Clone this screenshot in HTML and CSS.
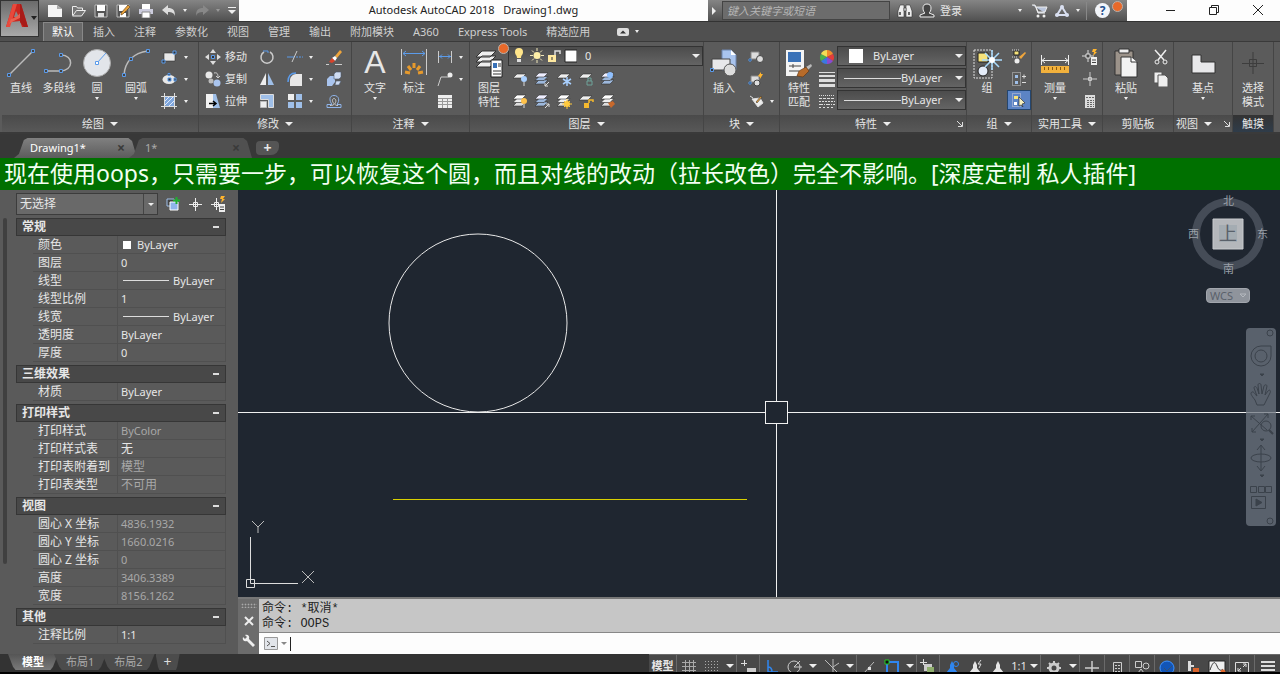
FILE: index.html
```html
<!DOCTYPE html>
<html lang="zh-CN">
<head>
    <meta charset="UTF-8">
    <meta name="viewport" content="width=device-width, initial-scale=1.0">
    <title>Autodesk AutoCAD 2018 - Drawing1.dwg</title>
    <link rel="stylesheet" href="styles.css">
</head>
<body>
    <!-- shared icons -->
    <svg class="sprite" aria-hidden="true">
        <symbol id="sheets" viewBox="0 0 16 16">
            <path d="M5 9h9l-4 4H1z" fill="#ddd" stroke="#333" stroke-width=".6"/>
            <path d="M5 5.500h9l-4 4H1z" fill="#eee" stroke="#333" stroke-width=".6"/>
            <path d="M5 2h9l-4 4H1z" fill="#fff" stroke="#333" stroke-width=".6"/>
        </symbol>
        <symbol id="bluesheets" viewBox="0 0 16 16">
            <path d="M5 9h9l-4 4H1z" fill="#9db8dc" stroke="#333" stroke-width=".6"/>
            <path d="M5 5.500h9l-4 4H1z" fill="#9db8dc" stroke="#333" stroke-width=".6"/>
            <path d="M5 2h9l-4 4H1z" fill="#eef" stroke="#333" stroke-width=".6"/>
        </symbol>
        <symbol id="sheet" viewBox="0 0 16 16">
            <path d="M5 3h9l-4 4H1z" fill="#eee" stroke="#333" stroke-width=".6"/>
        </symbol>
        <symbol id="person" viewBox="0 0 16 16">
            <path d="M8 2l2 4v3l4 5-4-1v3H6v-3l-4 1 4-5V6z" fill="currentColor"/>
        </symbol>
    </svg>

    <header class="header">
        <button class="app-button" aria-label="应用程序菜单">
            <svg width="24" height="26" viewBox="0 0 24 26">
                <path d="M8 1h8l7 23h-6l-2-6-9 1-2 5H1z" fill="#c9261f"/>
                <path d="M8 1h4L5 24H1z" fill="#e8493c"/>
                <path d="M11 8l3 6H9z" fill="#888"/>
                <path d="M6 16c4-1 8-4 11-8l2 5c-4 2-9 4-15 8z" fill="#e8604f"/>
                <path d="M15 19l4 5h4L16 1h-1z" fill="#a81b18"/>
            </svg>
            <i class="caret dark"></i>
        </button>

        <div class="title-row">
            <div class="quick">
                <button aria-label="新建"><svg width="16" height="14" viewBox="0 0 16 14"><path d="M1 1h9l5 4v8H1z" fill="#f4f4f4"/><path d="M10 1v4h5z" fill="#aaa"/></svg></button>
                <button aria-label="打开"><svg width="16" height="14" viewBox="0 0 16 14" fill="none" stroke="#eee"><path d="M1.500 11V2.500h4l1 1.500h5v3M1.500 12l4-5.500h9l-4 5.500z" fill="#777"/></svg></button>
                <button aria-label="保存"><svg width="14" height="14" viewBox="0 0 14 14"><path d="M1 1h12v12H1z" fill="#555" stroke="#bbb"/><path d="M3 1h8v6H3z" fill="#fff"/><path d="M4 9h6v4H4z" fill="#ddd"/></svg></button>
                <button aria-label="另存为"><svg width="15" height="14" viewBox="0 0 15 14"><path d="M1 1h12v12H1z" fill="#555" stroke="#bbb"/><path d="M3 1h8v6H3zM4 9h6v4H4z" fill="#fff"/><path d="M5 9l7-8 2 2-7 7-2 1z" fill="#e9a23b" stroke="#5b3a10" stroke-width=".6"/></svg></button>
                <button aria-label="打印"><svg width="16" height="14" viewBox="0 0 16 14"><path d="M4 0h8v5H4z" fill="#fff"/><path d="M1 5h14v5H1z" fill="#ccd"/><path d="M4 8h8v6H4z" fill="#fff" stroke="#888"/></svg></button>
                <button aria-label="放弃"><svg width="14" height="14" viewBox="0 0 14 14"><path d="M0 6l6-5v3c5 0 7 2 7 8-1-3-3-4-7-4v3z" fill="#ddd"/></svg></button>
                <i class="caret"></i>
                <button aria-label="重做"><svg width="14" height="14" viewBox="0 0 14 14"><path d="M14 6L8 1v3C3 4 1 6 1 12c1-3 3-4 7-4v3z" fill="#888"/></svg></button>
                <i class="caret faint"></i>
                <button aria-label="自定义快速访问工具栏"><svg width="8" height="8" viewBox="0 0 8 8" fill="#eee"><path d="M0 0h8v1H0zM0 3h8L4 7z"/></svg></button>
            </div>
            <div class="title">Autodesk AutoCAD 2018 &nbsp;&nbsp;Drawing1.dwg</div>
            <div class="info">
                <svg class="play" width="4" height="8" viewBox="0 0 4 8"><path d="M0 0l4 4-4 4z" fill="#eee"/></svg>
                <input class="search" type="text" placeholder="键入关键字或短语" aria-label="搜索">
                <button aria-label="查找"><svg width="16" height="16" viewBox="0 0 16 16" fill="#eee" stroke="#333" stroke-width=".6"><path d="M3 2h4v5l0 7H1V8zM9 2h4l2 6v6H9z"/><path d="M7 5h2v3H7z"/><path d="M3 9v3M12 9v3" stroke="#666" stroke-width="2"/></svg></button>
                <button class="login"><svg width="16" height="16" viewBox="0 0 16 16"><path d="M8 1c3 0 4 2 4 4 0 3-1 4-2 5l5 2v2H1v-2l5-2C5 9 4 8 4 5c0-2 1-4 4-4z" fill="#444" stroke="#eee"/></svg>登录</button>
                <i class="caret push"></i>
                <button aria-label="应用商店"><svg width="16" height="14" viewBox="0 0 16 14"><path d="M0 1h3l3 8h7M4 3h11l-2 5H6z" fill="#bbc6dd" stroke="#eee"/><circle cx="6" cy="12" r="1.500" fill="#eee"/><circle cx="12" cy="12" r="1.500" fill="#eee"/></svg></button>
                <button aria-label="A360"><svg width="16" height="14" viewBox="0 0 16 14"><path d="M8 3l5 8H3z" fill="none" stroke="#d9dff0" stroke-width="2"/><circle cx="8" cy="3" r="2" fill="#d9dff0"/><circle cx="3" cy="11" r="2" fill="#d9dff0"/><circle cx="13" cy="11" r="2" fill="#d9dff0"/></svg></button>
                <i class="caret"></i>
                <span class="info-line"></span>
                <button class="help" aria-label="帮助">?<span class="dot"></span></button>
            </div>
            <div class="window-buttons">
                <button aria-label="最小化"><svg width="12" height="12" viewBox="0 0 12 12" stroke="#222"><path d="M1 6.500h9"/></svg></button>
                <button aria-label="还原"><svg width="12" height="12" viewBox="0 0 12 12" fill="none" stroke="#222"><path d="M1.500 3.500h7v7h-7zM3.500 3V1.500h7v7H9"/></svg></button>
                <button aria-label="关闭"><svg width="12" height="12" viewBox="0 0 12 12" stroke="#222"><path d="M1 1l10 10M11 1L1 11"/></svg></button>
            </div>
        </div>

        <nav class="menu">
            <a class="active" href="#">默认</a>
            <a href="#">插入</a>
            <a href="#">注释</a>
            <a href="#">参数化</a>
            <a href="#">视图</a>
            <a href="#">管理</a>
            <a href="#">输出</a>
            <a href="#">附加模块</a>
            <a href="#">A360</a>
            <a href="#">Express Tools</a>
            <a href="#">精选应用</a>
            <button class="menu-toggle" aria-label="最小化功能区"><svg width="12" height="8" viewBox="0 0 12 8"><rect width="12" height="8" rx="2" fill="#ddd"/><path d="M3 5.500l3-3 3 3z" fill="#333"/></svg><i class="caret"></i></button>
        </nav>
    </header>

    <section class="ribbon">
        <div class="panel draw">
            <div class="tools">
                <button class="big">
                    <svg width="30" height="34" viewBox="0 0 30 34" fill="none"><path d="M3 29L27 5" stroke="#bbb" stroke-width="1.500"/><path d="M1.500 27.500h3v3h-3zM25.500 3.500h3v3h-3z" fill="#444" stroke="#5b9bea"/></svg>
                    <span>直线</span>
                </button>
                <button class="big">
                    <svg width="30" height="34" viewBox="0 0 30 34" fill="none"><path d="M2 25h14c14 0 14-16 1-16" stroke="#bbb" stroke-width="1.500"/><path d="M.5 23.500h3v3h-3zM15.500 23.500h3v3h-3zM15.500 7.500h3v3h-3z" fill="#444" stroke="#5b9bea"/></svg>
                    <span>多段线</span>
                </button>
                <button class="big">
                    <svg width="30" height="34" viewBox="0 0 30 34" fill="none"><circle cx="15" cy="17" r="13.500" fill="#e2e5ea" stroke="#aaa"/><path d="M15 17l9-10" stroke="#5b9bea"/><path d="M13.500 15.500h3v3h-3z" fill="#fff" stroke="#5b9bea"/></svg>
                    <span>圆</span><i class="caret"></i>
                </button>
                <button class="big">
                    <svg width="30" height="34" viewBox="0 0 30 34" fill="none"><path d="M3 29C4 16 12 7 27 5" stroke="#bbb" stroke-width="1.500"/><path d="M1.500 27.500h3v3h-3zM8.500 11.500h3v3h-3zM25.500 3.500h3v3h-3z" fill="#444" stroke="#5b9bea"/></svg>
                    <span>圆弧</span><i class="caret"></i>
                </button>
                <div class="smalls">
                    <button class="small" aria-label="矩形"><svg width="16" height="16" viewBox="0 0 16 16"><path d="M3 4h11v8H3z" fill="#e8e8e8" stroke="#333" stroke-width=".6"/><path d="M1 11h3v3H1zM12 2h3v3h-3z" fill="#333" stroke="#5b9bea"/></svg><i class="caret"></i></button>
                    <button class="small" aria-label="椭圆"><svg width="16" height="16" viewBox="0 0 16 16"><ellipse cx="8" cy="8.500" rx="6.500" ry="4.500" fill="#e8e8e8"/><path d="M7 7h3v3H7z" fill="#333" stroke="#5b9bea"/><path d="M13 7h2v3h-2zM7 2.500h2v2H7z" fill="#333" stroke="#5b9bea"/></svg><i class="caret"></i></button>
                    <button class="small" aria-label="图案填充"><svg width="16" height="16" viewBox="0 0 16 16"><path d="M4 4h9v9H4z" fill="#7fa6dc"/><path d="M4 8l4-4M4 12l8-8M8 13l5-5" stroke="#dfeafc"/><path d="M0 3.500h16M0 13.500h16M3.500 0v16M13.500 0v16" stroke="#ddd"/></svg><i class="caret"></i></button>
                </div>
            </div>
            <button class="panel-title">绘图<i class="caret wide"></i></button>
        </div>

        <div class="panel modify">
            <div class="tools modify-grid">
                <button class="small text"><svg width="16" height="16" viewBox="0 0 16 16"><path d="M8 0l3 4H5zM8 16l3-4H5zM0 8l4-3v6zM16 8l-4-3v6z" fill="#ddd"/><path d="M6.500 6.500h3v3h-3z" fill="#333" stroke="#5b9bea"/></svg>移动</button>
                <button class="small" aria-label="旋转"><svg width="16" height="16" viewBox="0 0 16 16" fill="none"><path d="M5 3a6 6 0 1 0 6 0" stroke="#ccc" stroke-width="1.500"/><path d="M4 2h5v2" stroke="#5b9bea"/></svg></button>
                <button class="small" aria-label="修剪"><svg width="16" height="16" viewBox="0 0 16 16"><path d="M0 8h7" stroke="#5b9bea"/><path d="M9 8h7" stroke="#5b9bea" stroke-dasharray="2 1"/><path d="M5 13L10 2" stroke="#ccc"/></svg><i class="caret"></i></button>
                <button class="small" aria-label="删除"><svg width="16" height="16" viewBox="0 0 16 16"><path d="M0 15.500h3M9 15.500h7" stroke="#ccc"/><path d="M9 7l5-6 2 2-5 6z" fill="#f0a63c"/><path d="M6 9l3-2 2 2-2 3z" fill="#fff"/><path d="M3 13l3-4 3 3-3 2z" fill="#d8432b"/></svg></button>

                <button class="small text"><svg width="16" height="16" viewBox="0 0 16 16"><circle cx="4" cy="4" r="3.500" fill="#e8e8e8"/><circle cx="6" cy="10" r="2.500" fill="#bbb"/><circle cx="12" cy="12" r="3.500" fill="#a9c4ee"/><path d="M9 2c4-1 4 2 4 5M11 5l2 2 2-2" stroke="#ccc" fill="none"/></svg>复制</button>
                <button class="small" aria-label="镜像"><svg width="16" height="16" viewBox="0 0 16 16"><path d="M7 2v12H1z" fill="#eee"/><path d="M9 2v12h6z" fill="#9fbfe8"/></svg></button>
                <button class="small" aria-label="圆角"><svg width="16" height="16" viewBox="0 0 16 16"><path d="M3 15V9c0-3 3-6 6-6h6v12z" fill="#e8e8e8"/><path d="M1 11c0-6 3-9 8-9" stroke="#5b9bea" stroke-width="1.500" fill="none"/></svg><i class="caret"></i></button>
                <button class="small" aria-label="分解"><svg width="16" height="16" viewBox="0 0 16 16"><path d="M1 8l3-3h5v6l-3 4H1z" fill="#a9c4ee"/><path d="M8 3l2-2h5v5l-2 2H8zM10 10h5l-2 4h-4z" fill="#cfdcf2" stroke="#4d5a70" stroke-width=".6"/></svg></button>

                <button class="small text"><svg width="16" height="16" viewBox="0 0 16 16"><path d="M1 1h7v14H1z" fill="#f2f2f2"/><path d="M8 1h3l4 14H8z" fill="#9fbfe8"/><path d="M4 10.500h6M8 8l3 2.500L8 13" stroke="#000" fill="none" stroke-width="1.500"/></svg>拉伸</button>
                <button class="small" aria-label="缩放"><svg width="16" height="16" viewBox="0 0 16 16"><path d="M1.500 1.500h13v13h-5v-8h-8z" fill="#9fbfe8" stroke="#ddd"/><path d="M1.500 8.500h6v6h-6z" fill="#eee" stroke="#bbb"/></svg></button>
                <button class="small" aria-label="阵列"><svg width="16" height="16" viewBox="0 0 16 16"><path d="M1 1h6v6H1z" fill="#eee"/><path d="M9 1h6v6H9zM1 9h6v6H1zM9 9h6v6H9z" fill="#9fbfe8"/></svg><i class="caret"></i></button>
                <button class="small" aria-label="偏移"><svg width="16" height="16" viewBox="0 0 16 16" fill="none"><path d="M1 14.500h14v-3h-4c3-4 2-9-3-9s-5 5-2 9H1z" stroke="#8fb4ea"/><path d="M4 12.500c2 0 4 0 4-2-3-3-1-5 0-5s3 2 1 5c0 2 1 2 3 2" stroke="#ccc"/></svg></button>
            </div>
            <button class="panel-title">修改<i class="caret wide"></i></button>
        </div>

        <div class="panel annotate">
            <div class="tools">
                <button class="big">
                    <b class="letter">A</b>
                    <span>文字</span><i class="caret"></i>
                </button>
                <button class="big">
                    <svg width="30" height="34" viewBox="0 0 30 34" fill="none"><path d="M2.500 3v26M27.500 3v26" stroke="#ccc"/><path d="M4 7.500h22M7 5L4 7.500 7 10M23 5l3 2.500-3 2.500" stroke="#5b9bea"/><path d="M15 17v5M9 20l3 4M21 20l-3 4M6 26l5 1M24 26l-5 1" stroke="#e79a2c" stroke-width="3"/></svg>
                    <span>标注</span>
                </button>
                <div class="smalls">
                    <button class="small" aria-label="线性"><svg width="16" height="16" viewBox="0 0 16 16" fill="none"><path d="M1.500 2v12M14.500 2v12" stroke="#ccc"/><path d="M2 7.500h12M5 5.500L3 7.500l2 2M11 5.500l2 2-2 2" stroke="#5b9bea"/></svg><i class="caret"></i></button>
                    <button class="small" aria-label="引线"><svg width="16" height="16" viewBox="0 0 16 16" fill="none"><path d="M1 15l3-9h8" stroke="#ccc"/><circle cx="13" cy="4" r="2.500" fill="#eee"/></svg><i class="caret"></i></button>
                    <button class="small" aria-label="表格"><svg width="16" height="16" viewBox="0 0 16 16"><path d="M1 2h14v13H1z" fill="#eee"/><path d="M1 5.500h14M1 8.500h14M1 11.500h14M5.500 5v10M10.500 5v10" stroke="#999"/></svg></button>
                </div>
            </div>
            <button class="panel-title">注释<i class="caret wide"></i></button>
        </div>

        <div class="panel layers">
            <div class="tools">
                <button class="big">
                    <svg width="30" height="34" viewBox="0 0 30 34"><path d="M8 15h14l-6 6H2z M8 10h14l-6 6H2z M8 5h14l-6 6H2z" fill="#eee" stroke="#333"/><path d="M17 14h11v17H17z" fill="#fff" stroke="#222"/><path d="M19 17h4v5h-4z" fill="#3a72b8"/><path d="M24 18h3M24 20h3M19 25h8M19 28h8" stroke="#333"/></svg>
                    <span>图层<br>特性</span>
                    <span class="dot"></span>
                </button>
                <div class="layer-tools">
                    <div class="combo">
                        <svg width="66" height="18" viewBox="0 0 66 18">
                            <path d="M8 1a4 4 0 0 1 4 4c0 3-2 3-2 6H6c0-3-2-3-2-6a4 4 0 0 1 4-4z" fill="#ffe58a"/><path d="M6 12h4v3H6z" fill="#ddd"/>
                            <circle cx="26" cy="8.500" r="3.500" fill="#fff0a8"/><path d="M26 1v3M26 13v3M19 8.500h3M30 8.500h3M21 3.500l2 2M31 3.500l-2 2M21 13.500l2-2M31 13.500l-2-2" stroke="#f0e6b8"/>
                            <path d="M37 8h8v7h-8z" fill="#ffe9a0"/><path d="M44 8V4h5v3" stroke="#ddd" fill="none" stroke-width="1.500"/><path d="M41 10v3" stroke="#333"/>
                            <path d="M54 3h12v12H54z" fill="#fff" stroke="#222"/>
                        </svg>
                        <select aria-label="图层"><option>0</option></select>
                    </div>
                    <div class="layer-icons">
                        <button class="small" aria-label="关闭图层"><svg width="16" height="16"><use href="#sheet"/><circle cx="12" cy="8" r="3" fill="#a9d0ff"/><path d="M12 11v4" stroke="#ddd"/></svg></button>
                        <button class="small" aria-label="隔离"><svg width="16" height="16"><use href="#bluesheets"/><path d="M15 11l-4 4m0-3v3h3" stroke="#ddd" fill="none"/></svg></button>
                        <button class="small" aria-label="冻结"><svg width="16" height="16"><use href="#sheet"/><path d="M11 6v9M7 8l8 5M15 8l-8 5" stroke="#a9d0ff" stroke-width="1.500"/></svg></button>
                        <button class="small" aria-label="锁定"><svg width="16" height="16"><use href="#sheet"/><path d="M9 10h5v4H9zM10 10V7h3v3" fill="none" stroke="#6fa39a"/></svg></button>
                        <button class="small" aria-label="置为当前"><svg width="16" height="16"><use href="#bluesheets"/><circle cx="10" cy="4" r="3" fill="#8fc0ff"/></svg></button>
                        <button class="small" aria-label="打开所有图层"><svg width="16" height="16"><use href="#sheets"/><circle cx="12" cy="8" r="3" fill="#ffc24a"/><path d="M12 11v4" stroke="#ddd"/></svg></button>
                        <button class="small" aria-label="取消隔离"><svg width="16" height="16"><use href="#bluesheets"/><path d="M11 15l4-4m-3 0h3v3" stroke="#ddd" fill="none"/></svg></button>
                        <button class="small" aria-label="解冻"><svg width="16" height="16"><use href="#sheets"/><circle cx="11" cy="11" r="3" fill="#ffc93c"/><path d="M11 6v10M6 11h10M8 8l6 6M14 8l-6 6" stroke="#ffc93c"/></svg></button>
                        <button class="small" aria-label="解锁"><svg width="16" height="16"><use href="#sheet"/><path d="M6 10h5v5H6z" fill="#f5b92e"/><path d="M11 10V7h4v2" fill="none" stroke="#f5b92e" stroke-width="1.500"/></svg></button>
                        <button class="small" aria-label="匹配图层"><svg width="16" height="16"><use href="#sheets"/><path d="M8 10l5-2 2 3-4 4z" fill="#c8692c"/></svg></button>
                    </div>
                </div>
            </div>
            <button class="panel-title">图层<i class="caret wide"></i></button>
        </div>

        <div class="panel block">
            <div class="tools">
                <button class="big">
                    <svg width="30" height="34" viewBox="0 0 30 34"><path d="M13 4h9l5 5v15H13z" fill="#a9c4ee" stroke="#6e87b0"/><path d="M22 4v5h5z" fill="#fff"/><path d="M3 13h18v11H3z" fill="#e8e8ea" stroke="#444"/><circle cx="21" cy="24" r="6" fill="#ddd" stroke="#555"/><path d="M1.500 22.500h3v3h-3z" fill="#333" stroke="#5b9bea"/></svg>
                    <span>插入</span>
                </button>
                <div class="smalls">
                    <button class="small" aria-label="创建块"><svg width="16" height="16" viewBox="0 0 16 16"><path d="M3 3h8v7H3z" fill="#ddd" stroke="#888"/><circle cx="12" cy="10" r="3.500" fill="#ddd" stroke="#444"/><path d="M1 10h2v2H1z" stroke="#5b9bea"/></svg></button>
                    <button class="small" aria-label="编辑块"><svg width="16" height="16" viewBox="0 0 16 16"><path d="M3 5h8v6H3z" fill="#ddd" stroke="#888"/><circle cx="9" cy="12" r="3" fill="#ddd" stroke="#444"/><path d="M1 11h2v2H1z" stroke="#5b9bea"/><path d="M10 5l3-4v2h2l-3 5V6z" fill="#ffb52e"/></svg></button>
                    <button class="small" aria-label="编辑属性"><svg width="16" height="16" viewBox="0 0 16 16"><path d="M2 3l3 2M4 6l6 8 5-4-3-5z" stroke="#ddd" fill="#eee"/><path d="M8 9l5-6 1 1-5 6z" fill="#f0a63c" stroke="#333" stroke-width=".6"/></svg><i class="caret"></i></button>
                </div>
            </div>
            <button class="panel-title">块<i class="caret wide"></i></button>
        </div>

        <div class="panel props">
            <div class="tools">
                <button class="big">
                    <svg width="30" height="34" viewBox="0 0 30 34"><path d="M2 4h18v26H2z" fill="#f4f4f4"/><path d="M4 6h13v10H4z" fill="#3a72b8"/><path d="M5 20h12M9 18v4M5 25h10" stroke="#444"/><path d="M22 21l5-3 1 2-4 4z" fill="#bbb"/><path d="M15 25l7-4 3 4-6 6-6-1z" fill="#b76b2a" stroke="#5b3210" stroke-width=".6"/></svg>
                    <span>特性<br>匹配</span>
                </button>
                <div class="smalls">
                    <button class="small" aria-label="对象颜色"><svg width="16" height="16" viewBox="0 0 16 16"><path d="M8 8V1a7 7 0 0 1 6 4z" fill="#f08a2c"/><path d="M8 8l6-3a7 7 0 0 1 0 7z" fill="#e23c3c"/><path d="M8 8l6 4a7 7 0 0 1-6 3z" fill="#8a4bd0"/><path d="M8 8v7a7 7 0 0 1-6-3z" fill="#3b78e0"/><path d="M8 8l-6 4a7 7 0 0 1 0-7z" fill="#4cb04c"/><path d="M8 8L2 5a7 7 0 0 1 6-4z" fill="#f3dc55"/></svg></button>
                    <button class="small" aria-label="线宽"><svg width="16" height="16" viewBox="0 0 16 16" fill="#ddd"><path d="M0 1h16v1H0zM0 4h16v2H0zM0 8h16v3H0zM0 13h16v3H0z"/></svg></button>
                    <button class="small" aria-label="线型"><svg width="16" height="16" viewBox="0 0 16 16" stroke="#ddd"><path d="M0 2.500h16" stroke-dasharray="1 1"/><path d="M0 5.500h16" stroke-dasharray="3 1"/><path d="M0 8.500h16" stroke-dasharray="2 1"/><path d="M0 11.500h16" stroke-dasharray="4 1 1 1"/><path d="M0 14.500h16" stroke-dasharray="2 2"/></svg></button>
                </div>
                <div class="prop-combos">
                    <div class="combo color"><span class="swatch"></span><select aria-label="对象颜色"><option>ByLayer</option></select></div>
                    <div class="combo"><span class="line"></span><select aria-label="线宽"><option>ByLayer</option></select></div>
                    <div class="combo"><span class="line"></span><select aria-label="线型"><option>ByLayer</option></select></div>
                </div>
            </div>
            <div class="panel-title"><button>特性<i class="caret wide"></i></button><svg class="launcher" width="6" height="6" viewBox="0 0 6 6" stroke="#ddd" fill="none"><path d="M0 0l5 5M5.500 1v4.500H1"/></svg></div>
        </div>

        <div class="panel group">
            <div class="tools">
                <button class="big">
                    <svg width="34" height="34" viewBox="0 0 34 34"><path d="M4 4h18v28H4z" fill="none" stroke="#ddd" stroke-dasharray="2 1"/><path d="M8 7h10v9H8z" fill="#f6e27a" stroke="#222"/><circle cx="13" cy="25" r="5" fill="#e4ecf8" stroke="#222"/><path d="M22 4v20M12 14h20M15 7l14 14M29 7L15 21" stroke="#a9dcff" stroke-width="1.500"/><circle cx="22" cy="14" r="3" fill="#fff"/></svg>
                    <span>组</span>
                </button>
                <div class="smalls">
                    <button class="small" aria-label="解除编组"><svg width="16" height="16" viewBox="0 0 16 16"><path d="M3 2h5v4H3z" fill="#f6e27a" stroke="#222"/><circle cx="6" cy="12" r="2.500" fill="#eee"/><path d="M1 1h8M1 8h6" stroke="#ddd" stroke-dasharray="1 1"/><path d="M8 8l6-5 1 1-5 6z" fill="#f0a63c"/></svg></button>
                    <button class="small" aria-label="组编辑"><svg width="16" height="16" viewBox="0 0 16 16" fill="none"><path d="M1.500 1.500h8v13h-8z" stroke="#ccc" stroke-dasharray="1 1"/><path d="M4 4h3v3H4zM4 10h3v3H4z" fill="#9fbfe8"/><path d="M11 5.500h4M13 3.500v4M11 11.500h4" stroke="#ddd"/></svg></button>
                    <button class="small pressed" aria-label="启用组选择"><svg width="16" height="16" viewBox="0 0 16 16" fill="none"><path d="M1.500 1.500h8v13h-8z" stroke="#ccd" stroke-dasharray="1 1"/><path d="M3 4h4v3H3z" fill="#f6e27a"/><path d="M3 10h3v3H3z" fill="#fff"/><path d="M8 5l6 6-3 1 1 3-2-2-2 1z" fill="#f6f0c0" stroke="#222" stroke-width=".6"/></svg></button>
                </div>
            </div>
            <button class="panel-title">组<i class="caret wide"></i></button>
        </div>

        <div class="panel utils">
            <div class="tools">
                <button class="big">
                    <svg width="30" height="34" viewBox="0 0 30 34" fill="none"><path d="M1.500 9v10M28.500 9v10M2 14.500h26M5 12l-3 2.500L5 17M25 12l3 2.500-3 2.500" stroke="#eee"/><path d="M1 20h28v7H1z" fill="#f2b13c"/><path d="M4.500 21v3M8.500 21v3M12.500 21v3M16.500 21v3M20.500 21v3M24.500 21v3" stroke="#8a5a10"/></svg>
                    <span>测量</span><i class="caret"></i>
                </button>
                <div class="smalls">
                    <button class="small" aria-label="快速选择"><svg width="16" height="16" viewBox="0 0 16 16"><path d="M6 1v12M0 7h12" stroke="#ddd"/><path d="M4 5h4v4H4z" fill="#444" stroke="#ddd"/><path d="M11 0h4l-2 3h2l-4 4 1-4h-2z" fill="#ffb52e"/><path d="M9 8h6v8H9z" fill="#eee"/><path d="M10 11h4M10 13.500h4" stroke="#444"/></svg></button>
                    <button class="small" aria-label="点坐标"><svg width="16" height="16" viewBox="0 0 16 16" stroke="#ccc" fill="none"><path d="M8 1v14M1 8h14M6.500 6.500h3v3h-3z"/></svg></button>
                    <button class="small" aria-label="快速计算器"><svg width="16" height="16" viewBox="0 0 16 16"><path d="M3 2h10v13H3z" fill="#ddd"/><path d="M4 4.500h8M5 7.500h7M5 9.500h7M5 11.500h7M5 13.500h7" stroke="#666" stroke-dasharray="2 1"/></svg></button>
                </div>
            </div>
            <button class="panel-title">实用工具<i class="caret wide"></i></button>
        </div>

        <div class="panel clip">
            <div class="tools">
                <button class="big">
                    <svg width="30" height="34" viewBox="0 0 30 34"><path d="M4 5h18v24H4z" fill="#9c938a" stroke="#333"/><path d="M8 3h10v4H8z" fill="#eee" stroke="#333"/><path d="M10 11h10l6 5v15H10z" fill="#f2f2f2" stroke="#333"/><path d="M20 11v5h6" fill="#fff" stroke="#333"/></svg>
                    <span>粘贴</span><i class="caret"></i>
                </button>
                <div class="smalls">
                    <button class="small" aria-label="剪切"><svg width="16" height="16" viewBox="0 0 16 16" fill="none" stroke="#eee"><path d="M2 1l9 10M13 1L5 11" stroke-width="1.500"/><circle cx="4" cy="13" r="2"/><circle cx="12" cy="13" r="2"/></svg></button>
                    <button class="small" aria-label="复制剪裁"><svg width="16" height="16" viewBox="0 0 16 16" fill="#eee" stroke="#555"><path d="M1 1h8v11H1z"/><path d="M5 4h7l3 3v9H5z"/></svg></button>
                </div>
            </div>
            <div class="panel-title">剪贴板</div>
        </div>

        <div class="panel view">
            <div class="tools">
                <button class="big">
                    <svg width="30" height="34" viewBox="0 0 30 34"><path d="M4 9h9v7h14v11H4z" fill="#e8e8ea" stroke="#333"/></svg>
                    <span>基点</span><i class="caret"></i>
                </button>
            </div>
            <div class="panel-title"><button>视图<i class="caret wide"></i></button><svg class="launcher" width="6" height="6" viewBox="0 0 6 6" stroke="#ddd" fill="none"><path d="M0 0l5 5M5.500 1v4.500H1"/></svg></div>
        </div>

        <div class="panel touch">
            <div class="tools">
                <button class="big">
                    <svg width="30" height="34" viewBox="0 0 30 34" stroke="#3d3d3d" fill="none"><path d="M15 6v22M4 17.500h22M11.500 13.500h7v7h-7z"/></svg>
                    <span>选择<br>模式</span>
                </button>
            </div>
            <div class="panel-title">触摸</div>
        </div>
    </section>

    <nav class="doc-tabs">
        <div class="doc-tab active"><a href="#">Drawing1*</a><button aria-label="关闭">×</button></div>
        <div class="doc-tab"><a href="#">1*</a><button aria-label="关闭">×</button></div>
        <button class="new-tab" aria-label="新图形">+</button>
    </nav>

    <div class="banner">现在使用oops，只需要一步，可以恢复这个圆，而且对线的改动（拉长改色）完全不影响。[深度定制 私人插件]</div>

    <main class="workspace">
        <aside class="palette">
            <div class="scroll-thumb"></div>
            <div class="palette-body">
                <div class="palette-top">
                    <div class="select-wrap"><select aria-label="选择"><option>无选择</option></select></div>
                    <button aria-label="切换 PICKADD"><svg width="14" height="14" viewBox="0 0 14 14"><path d="M1 2h7v7H1z" fill="#444" stroke="#9fbfe8"/><path d="M4 5h8v8H4z" fill="#8fb4ea" stroke="#fff"/><path d="M10.500 0v7M7 3.500h7" stroke="#1fae30" stroke-width="2"/></svg></button>
                    <button aria-label="选择对象"><svg width="14" height="14" viewBox="0 0 14 14" stroke="#eee" fill="#555"><path d="M7.500 1v13M1 7.500h13M5.500 5.500h4v4h-4z"/></svg></button>
                    <button aria-label="快速选择"><svg width="16" height="16" viewBox="0 0 16 16"><path d="M6.500 2v12M1 8.500h10M4.500 6.500h4v4h-4z" stroke="#eee" fill="#555"/><path d="M11 0h4l-2 3h2l-4 4 1-4h-2z" fill="#ffb52e"/><path d="M9 8h6v8H9z" fill="#eee"/><path d="M10 11h4M10 13.500h4" stroke="#444"/></svg></button>
                </div>

                <h3>常规<button aria-label="折叠"></button></h3>
                <table>
                    <tr><th scope="row">颜色</th><td><span class="chip"></span>ByLayer</td></tr>
                    <tr><th scope="row">图层</th><td>0</td></tr>
                    <tr><th scope="row">线型</th><td><span class="rule"></span>ByLayer</td></tr>
                    <tr><th scope="row">线型比例</th><td>1</td></tr>
                    <tr><th scope="row">线宽</th><td><span class="rule"></span>ByLayer</td></tr>
                    <tr><th scope="row">透明度</th><td>ByLayer</td></tr>
                    <tr><th scope="row">厚度</th><td>0</td></tr>
                </table>

                <h3>三维效果<button aria-label="折叠"></button></h3>
                <table>
                    <tr><th scope="row">材质</th><td>ByLayer</td></tr>
                </table>

                <h3>打印样式<button aria-label="折叠"></button></h3>
                <table>
                    <tr><th scope="row">打印样式</th><td class="off">ByColor</td></tr>
                    <tr><th scope="row">打印样式表</th><td class="cn">无</td></tr>
                    <tr><th scope="row">打印表附着到</th><td class="off cn">模型</td></tr>
                    <tr><th scope="row">打印表类型</th><td class="off cn">不可用</td></tr>
                </table>

                <h3>视图<button aria-label="折叠"></button></h3>
                <table>
                    <tr><th scope="row">圆心 X 坐标</th><td class="off">4836.1932</td></tr>
                    <tr><th scope="row">圆心 Y 坐标</th><td class="off">1660.0216</td></tr>
                    <tr><th scope="row">圆心 Z 坐标</th><td class="off">0</td></tr>
                    <tr><th scope="row">高度</th><td class="off">3406.3389</td></tr>
                    <tr><th scope="row">宽度</th><td class="off">8156.1262</td></tr>
                </table>

                <h3>其他<button aria-label="折叠"></button></h3>
                <table>
                    <tr><th scope="row">注释比例</th><td>1:1</td></tr>
                </table>
            </div>
        </aside>

        <section class="stage">
            <div class="canvas">
                <svg class="drawing" width="100%" height="100%" fill="none">
                    <circle cx="240" cy="133" r="89" stroke="#e8e8e8"/>
                    <path d="M155 309.500h354" stroke="#d8d000"/>
                    <!-- crosshair -->
                    <line x1="0" y1="222.500" x2="527" y2="222.500" stroke="#f0f0f0"/>
                    <line x1="550" y1="222.500" x2="100%" y2="222.500" stroke="#f0f0f0"/>
                    <line x1="538.500" y1="0" x2="538.500" y2="211" stroke="#f0f0f0"/>
                    <line x1="538.500" y1="234" x2="538.500" y2="100%" stroke="#f0f0f0"/>
                    <rect x="527.500" y="211.500" width="22" height="22" stroke="#f0f0f0"/>
                    <!-- ucs icon -->
                    <path d="M12.500 347v46.500H60M8.500 389.500h8v8h-8z" stroke="#ddd"/>
                    <path d="M14 331l6 6 6-6M20 337v6M64 381l12 12M76 381l-12 12" stroke="#bbb"/>
                </svg>

                <div class="viewcube">
                    <svg width="80" height="82" viewBox="0 0 80 82">
                        <circle cx="40" cy="41" r="32" fill="none" stroke="#454c57" stroke-width="8"/>
                        <path d="M25 26h30v30H25z" fill="#b4b7bb" stroke="#c8cacd"/>
                        <path d="M31 32h18v17H31z" fill="#a4acb2"/>
                    </svg>
                    <span class="north">北</span>
                    <span class="west">西</span>
                    <span class="top">上</span>
                    <span class="east">东</span>
                    <span class="south">南</span>
                </div>
                <button class="wcs">WCS<svg width="8" height="5" viewBox="0 0 8 5" fill="none" stroke="#b4b8be"><path d="M1 1h6L4 4z"/></svg></button>

                <div class="navbar">
                    <svg width="30" height="198" viewBox="0 0 30 198" fill="none" stroke="#3b424b">
                        <circle cx="24" cy="5" r="3"/><circle cx="24" cy="193" r="3"/>
                        <path d="M15 18h10v10a10 10 0 1 1-10-10z"/><circle cx="15" cy="28" r="6"/>
                        <path d="M9 72c-4-5-5-7-3-8s4 4 5 4L8 60c0-2 2-2 3 0l2 6-1-9c0-2 3-2 3 0l1 9 2-8c1-2 3-1 3 0l-2 9 3-4c2-2 3 0 2 2l-6 12H11z"/>
                        <path d="M5 88l16 14M22 86L6 104M5 92v-4h4M22 90v-4h-4M6 100v4h4"/><circle cx="20" cy="98" r="5"/><path d="M23 102l4 4" stroke-width="2"/>
                        <path d="M15 118v24M11 122l4-5 4 5M11 138l4 5 4-5"/><ellipse cx="15" cy="130" rx="10" ry="4"/>
                        <path d="M4.500 158.500h6v6h-6zM12.500 158.500h6v6h-6zM19.500 158.500h6v6h-6zM5.500 168.500h14v12h-14z"/><path d="M10 171l6 3.500-6 3.500zM14 46h4l-2 2zM14 111h4l-2 2zM14 147h4l-2 2z" fill="#3b424b"/>
                    </svg>
                </div>
            </div>

            <div class="command">
                <div class="command-grip">
                    <span class="dots"></span>
                    <button aria-label="关闭"><svg width="10" height="10" viewBox="0 0 10 10" stroke="#eee" stroke-width="2"><path d="M1 1l8 8M9 1L1 9"/></svg></button>
                    <button aria-label="自定义"><svg width="14" height="14" viewBox="0 0 14 14"><path d="M1 3l2 2 2-2-2-2c3-1 5 1 4 4l6 6-2 2-6-6C2 8 0 6 1 3z" fill="#eee"/></svg></button>
                </div>
                <div class="command-main">
                    <div class="history">
                        <div>命令: *取消*</div>
                        <div>命令: OOPS</div>
                    </div>
                    <label class="prompt">
                        <svg width="14" height="13" viewBox="0 0 14 13" fill="none"><path d="M.5.5h13v12H.5z" fill="#e2e5ea" stroke="#999"/><path d="M3 4l3 2.500L3 9M7 9.500h4" stroke="#555"/></svg>
                        <i class="caret grey"></i>
                        <span class="cursor"></span>
                        <input type="text" aria-label="命令">
                    </label>
                </div>
            </div>
        </section>
    </main>

    <footer class="footer">
        <nav class="layout-tabs">
            <a class="active" href="#">模型</a>
            <a href="#">布局1</a>
            <a href="#">布局2</a>
            <button aria-label="新建布局">+</button>
        </nav>
        <div class="status">
            <button class="model end">模型</button>
            <button aria-label="栅格"><svg width="16" height="16" viewBox="0 0 16 16" stroke="#aaa"><path d="M1 3.500h14M1 7.500h14M1 11.500h14M4.500 1v14M8.500 1v14M12.500 1v14"/></svg></button>
            <button aria-label="捕捉"><svg width="16" height="16" viewBox="0 0 16 16" stroke="#aaa" stroke-dasharray="1 2"><path d="M1 2.500h14M1 5.500h14M1 8.500h14M1 11.500h14M1 14.500h14"/></svg></button>
            <button class="drop end" aria-label="捕捉设置"><i class="caret wide"></i></button>
            <button class="end" aria-label="推断约束"><svg width="16" height="16" viewBox="0 0 16 16"><path d="M4.500 1v6M1 4.500h6" stroke="#ddd"/><path d="M7 9h9v5H7z" fill="#ccc"/></svg></button>
            <button aria-label="正交"><svg width="16" height="16" viewBox="0 0 16 16" stroke="#2f86f0" fill="none" stroke-width="1.500"><path d="M4 1v12h10M4 8c3 0 4 2 4 5"/></svg></button>
            <button aria-label="极轴"><svg width="16" height="16" viewBox="0 0 16 16" stroke="#ccc" fill="none"><circle cx="7" cy="8" r="6"/><path d="M7 8h8M7 8l6-6"/></svg></button>
            <button class="drop" aria-label="极轴设置"><i class="caret wide"></i></button>
            <button aria-label="等轴测"><svg width="16" height="16" viewBox="0 0 16 16" stroke="#bbb"><path d="M1 1l14 14M9 0v16M9 8l6-4"/></svg></button>
            <button class="drop end" aria-label="等轴测设置"><i class="caret wide"></i></button>
            <button aria-label="对象捕捉追踪"><svg width="16" height="16" viewBox="0 0 16 16"><path d="M3 14L13 3" stroke="#bbb"/><path d="M7 8h3v3H7z" fill="#ddd"/></svg></button>
            <button aria-label="对象捕捉"><svg width="16" height="16" viewBox="0 0 16 16" fill="none"><path d="M3 3h11v11H3z" stroke="#2f86f0" stroke-width="2"/><path d="M1 1h4v4H1z" fill="#111" stroke="#2c2"/></svg></button>
            <button class="drop end" aria-label="捕捉模式"><i class="caret wide"></i></button>
            <button class="end" aria-label="线宽"><svg width="16" height="16" viewBox="0 0 16 16"><path d="M3.500 0v6M0 3.500h7" stroke="#ddd"/><path d="M4 5h8v7H4z" fill="#ccc"/><path d="M7 8h7v7H7z" fill="#8fae6c"/></svg></button>
            <button class="blue" aria-label="注释可见性"><svg width="16" height="16"><use href="#person"/><circle cx="12" cy="5" r="2.500" fill="none" stroke="#2f86f0"/></svg></button>
            <button aria-label="自动缩放"><svg width="16" height="16"><use href="#person"/><path d="M14 1l-3 4h3l-2 4" stroke="#ddd" fill="none"/></svg></button>
            <button aria-label="注释"><svg width="16" height="16"><use href="#person"/></svg></button>
            <button class="scale end">1:1<i class="caret wide"></i></button>
            <button aria-label="工作空间"><svg width="16" height="16" viewBox="0 0 16 16"><circle cx="8" cy="9" r="4" fill="none" stroke="#ccc" stroke-width="3"/><path d="M8 2v3M8 13v3M1 9h3M12 9h3M3 4l2 2M13 4l-2 2" stroke="#ccc" stroke-width="2"/></svg></button>
            <button class="drop end" aria-label="切换工作空间"><i class="caret wide"></i></button>
            <button class="end" aria-label="注释监视器"><svg width="16" height="16" viewBox="0 0 16 16" stroke="#ccc" stroke-width="1.500"><path d="M8 2v14M1 9h14"/></svg></button>
            <button class="end" aria-label="快捷特性"><svg width="16" height="16" viewBox="0 0 16 16" fill="none"><path d="M4.500 3.500h8v12h-8z" stroke="#ccc"/><path d="M6 6.500h5M6 9.500h5M6 12.500h5" stroke="#ccc" stroke-dasharray="2 1"/></svg></button>
            <button class="end" aria-label="隔离对象"><svg width="16" height="16" viewBox="0 0 16 16" fill="none" stroke="#ccc"><path d="M1.500 2.500h6v6h-6zM4 14l3-4 3 4z"/><circle cx="12" cy="7" r="3"/></svg></button>
            <button class="end" aria-label="硬件加速"><svg width="16" height="16" viewBox="0 0 16 16"><circle cx="8" cy="9" r="7" fill="#1255b8" stroke="#3d92ff"/><path d="M5 9l3 3 5-5" stroke="#39506e" fill="none"/></svg></button>
            <button aria-label="锁定"><svg width="16" height="16" viewBox="0 0 16 16"><path d="M3 2h3v10H3zM6 6h3v2H6z" fill="#ddd"/><path d="M8 9h6v6H8z" fill="#d9642c"/></svg></button>
            <button class="end" aria-label="性能"><svg width="18" height="16" viewBox="0 0 18 16"><path d="M1 2h16v13H1z" fill="#eee" stroke="#222"/><path d="M2 11c3-9 5-9 7-4s4 5 6 3" stroke="#333" fill="none"/><circle cx="15" cy="13" r="2.500" fill="#e0672c"/></svg></button>
            <button class="end" aria-label="全屏显示"><svg width="16" height="16" viewBox="0 0 16 16" fill="none" stroke="#ddd"><path d="M1.500 3.500h13v10h-13zM9 8l3-3M9 5h3v3M7 9l-3 3M4 9v3h3"/></svg></button>
            <button aria-label="自定义"><svg width="16" height="16" viewBox="0 0 16 16" stroke="#ddd" stroke-width="2"><path d="M1 3h14M1 7h14M1 11h14"/></svg></button>
        </div>
    </footer>
</body>
</html>
```

FILE: styles.css
```css
* {
    box-sizing: border-box;
}
body {
    margin: 0;
    height: 100vh;
    display: flex;
    flex-direction: column;
    overflow: hidden;
    background: #3a3a3a;
    color: #e6e6e6;
    font-family: "Noto Sans", "Noto Sans CJK SC", sans-serif;
    font-size: 11px;
    line-height: 14px;
}
button, select, input {
    font: inherit;
    color: inherit;
    background: none;
    border: none;
    padding: 0;
    margin: 0;
}
select {
    appearance: none;
    outline: none;
}
a {
    color: inherit;
    text-decoration: none;
}
svg {
    display: block;
    flex: none;
}
.sprite {
    position: absolute;
    width: 0;
    height: 0;
}
.caret {
    flex: none;
    width: 0;
    height: 0;
    border: 2px solid transparent;
    border-top: 3px solid #eee;
    border-bottom: none;
}
.caret.wide {
    border-width: 4px 4px 0;
}
.caret.dark {
    border-width: 4px 3px 0;
    border-top-color: #222;
}
.caret.faint {
    border-top-color: #999;
}
.caret.grey {
    border-width: 3px 3px 0;
    border-top-color: #888;
}
.dot {
    position: absolute;
    width: 11px;
    height: 11px;
    border-radius: 50%;
    background: #e8692a;
    border: 1px solid #b9b0aa;
}

/* title bar and menu */
.header {
    flex: none;
    display: grid;
    grid-template-columns: 39px 1fr;
    grid-template-rows: 22px 19px;
    background: #505050;
}
.app-button {
    grid-row: 1 / 3;
    height: 37px;
    display: flex;
    align-items: flex-start;
    gap: 2px;
    padding: 2px 0 0 4px;
    background: linear-gradient(#6b6b6b, #a9a9a9);
    border: 1px solid #333;
}
.app-button .caret {
    margin-top: 13px;
}
.title-row {
    display: flex;
    background: #fdfdfd;
    border-bottom: 1px solid #333;
}
.quick {
    width: 200px;
    display: flex;
    align-items: center;
    justify-content: space-between;
    padding: 0 3px 0 8px;
    background: linear-gradient(#858585, #505050);
}
.title {
    flex: 1;
    text-align: center;
    color: #222;
    font-size: 11px;
    line-height: 20px;
    white-space: nowrap;
}
.info {
    width: 419px;
    display: flex;
    align-items: center;
    gap: 6px;
    padding: 0 8px 0 4px;
    background: linear-gradient(#858585, #505050);
}
.search {
    width: 168px;
    height: 19px;
    padding: 0 4px;
    background: #6c6c6c;
    border: 1px solid #444;
    margin-right: 1px;
}
.search::placeholder {
    color: #b5b5b5;
    font-style: italic;
}
.login {
    display: flex;
    align-items: center;
    gap: 5px;
}
.push {
    margin-left: auto;
    margin-right: 4px;
}
.info-line {
    width: 1px;
    height: 18px;
    background: #888;
}
.help {
    position: relative;
    width: 15px;
    height: 15px;
    margin: 0 9px 0 2px;
    border-radius: 50%;
    background: #f2f5fa;
    color: #24508f;
    font-size: 12px;
    font-weight: bold;
    line-height: 15px;
}
.help .dot {
    left: 17px;
    top: -2px;
}
.window-buttons {
    width: 153px;
    display: flex;
    justify-content: space-around;
    padding-left: 22px;
}
.window-buttons button {
    height: 20px;
}
.menu {
    display: flex;
    align-items: stretch;
    padding-left: 4px;
    background: #505050;
    color: #cfcfcf;
}
.menu a {
    padding: 2px 9px;
    margin-right: 1px;
    line-height: 15px;
    white-space: nowrap;
}
.menu .active {
    background: #696969;
    color: #fff;
    border: 1px solid #888;
    border-bottom: none;
    padding: 1px 8px;
}
.menu-toggle {
    display: flex;
    align-items: center;
    gap: 6px;
    margin-left: 17px;
}

/* ribbon */
.ribbon {
    flex: none;
    display: flex;
    height: 93px;
    padding: 0 6px 0 2px;
    background: #5b5b5b;
    border-top: 1px solid #3a3a3a;
    border-bottom: 2px solid #3a3a3a;
}
.panel {
    flex: none;
    display: flex;
    flex-direction: column;
    border-right: 1px solid #454545;
}
.draw { width: 197px; }
.modify { width: 153px; }
.annotate { width: 118px; }
.layers { flex: 1; }
.block { width: 76px; }
.props { width: 187px; }
.group { width: 65px; }
.utils { width: 71px; }
.clip { width: 71px; }
.view { width: 59px; }
.touch { width: 41px; }
.tools {
    flex: 1;
    display: flex;
    padding-top: 4px;
}
.big {
    position: relative;
    display: flex;
    flex-direction: column;
    align-items: center;
    width: 38px;
    line-height: 14px;
    white-space: nowrap;
}
.big span:not(.dot) {
    margin-top: 1px;
}
.big .caret {
    margin-top: 2px;
}
.big .dot {
    left: 28px;
    top: -3px;
}
.draw .big:nth-child(4), .annotate .big:first-child, .block .big, .group .big {
    width: 40px;
}
.annotate .tools {
    padding-left: 3px;
}
.utils .big, .clip .big {
    width: 46px;
}
.view .big {
    width: 58px;
}
.touch .big {
    width: 40px;
}
.letter {
    height: 34px;
    font-family: "Liberation Sans", sans-serif;
    font-size: 32px;
    font-weight: normal;
    line-height: 32px;
}
.smalls {
    display: flex;
    flex-direction: column;
}
.small {
    display: flex;
    align-items: center;
    height: 22px;
    padding: 0 3px 0 4px;
    white-space: nowrap;
}
.small .caret {
    margin-left: 6px;
}
.draw .small {
    padding-left: 5px;
}
.draw .small .caret {
    margin-left: 7px;
}
.props .small {
    padding: 0 2px 0 1px;
}
.modify-grid {
    display: grid;
    grid-template-columns: 52px 28px 39px 24px;
    grid-template-rows: 22px 22px 22px;
    padding-left: 4px;
}
.small.text {
    padding: 0 2px;
    gap: 4px;
}
.small.pressed {
    padding: 0 3px;
    background: #5c84c4;
    border: 1px solid #24466f;
    height: 20px;
}
.panel-title {
    position: relative;
    flex: none;
    display: flex;
    align-items: center;
    justify-content: center;
    gap: 6px;
    height: 17px;
    background: linear-gradient(#4a4a4a, #585858);
    white-space: nowrap;
}
.panel-title button {
    display: flex;
    align-items: center;
    gap: 6px;
}
.props .launcher {
    position: absolute;
    right: 3px;
}
.view .panel-title {
    gap: 12px;
}
.touch .panel-title {
    background: linear-gradient(#333, #2f3c4a);
}
.combo {
    display: flex;
    align-items: center;
    height: 20px;
    padding-right: 2px;
    background: linear-gradient(#4c4c4c, #646464);
    border: 1px solid #333;
}
.combo::after, .select-wrap::after {
    content: "";
    border: 4px solid transparent;
    border-top-color: #eee;
    border-bottom: none;
}
.combo select {
    flex: 1;
    min-width: 0;
}
.layer-tools {
    flex: 1;
    min-width: 0;
}
.layer-tools .combo {
    gap: 8px;
    margin-bottom: 2px;
    padding-left: 2px;
}
.layer-icons {
    display: grid;
    grid-template-columns: repeat(5, 22px);
    grid-template-rows: 22px 22px;
}
.prop-combos {
    flex: 1;
    min-width: 0;
    display: flex;
    flex-direction: column;
    gap: 2px;
}
.prop-combos .combo {
    padding-left: 6px;
}
.prop-combos .color {
    padding-left: 11px;
    gap: 10px;
}
.swatch {
    width: 14px;
    height: 14px;
    background: #fff;
}
.line {
    width: 57px;
    height: 1px;
    background: #ddd;
}

/* file tabs */
.doc-tabs {
    flex: none;
    display: flex;
    align-items: flex-end;
    height: 24px;
    padding-left: 14px;
    background: #383838;
}
.doc-tab {
    display: flex;
    align-items: center;
    justify-content: space-between;
    width: 123px;
    height: 20px;
    padding: 0 12px 0 16px;
    margin-right: -8px;
    background: #505050;
    color: #aaa;
    clip-path: polygon(0 100%, 4% 80%, 8% 10%, 11% 0, 93% 0, 96% 15%, 100% 100%);
}
.doc-tab.active {
    background: linear-gradient(#808080, #5c5c5c);
    color: #fff;
}
.doc-tab button {
    color: #3a3a3a;
    font-size: 14px;
    font-weight: bold;
}
.new-tab {
    width: 23px;
    height: 14px;
    margin: 0 0 3px 12px;
    background: #555;
    border-radius: 4px 4px 8px 4px;
    font-size: 14px;
    font-weight: bold;
}
.banner {
    flex: none;
    height: 32px;
    padding-left: 4px;
    background: #007000;
    color: #f2fff2;
    font-size: 23px;
    line-height: 31px;
    white-space: nowrap;
}

/* workspace */
.workspace {
    flex: 1;
    min-height: 0;
    display: grid;
    grid-template-columns: 238px 1fr;
}
.palette {
    display: flex;
    min-height: 0;
    overflow: hidden;
    background: #5a5a5a;
}
.scroll-thumb {
    width: 4px;
    height: 346px;
    margin: 28px 9px 0 3px;
    border-radius: 2px;
    background: #404040;
}
.palette-body {
    width: 210px;
}
.palette-top {
    display: flex;
    align-items: center;
    gap: 8px;
    height: 22px;
    margin: 3px 0;
}
.select-wrap {
    flex: none;
    display: flex;
    align-items: center;
    width: 142px;
    height: 22px;
    padding: 0 3px;
    background: #696969;
    border: 1px solid #3c3c3c;
}
.select-wrap::after {
    border-width: 3px 3px 0;
}
.select-wrap select {
    flex: 1;
    font-size: 12px;
    height: 20px;
    margin-right: 4px;
    border-right: 1px solid #444;
}
.palette h3 {
    display: flex;
    align-items: center;
    justify-content: space-between;
    height: 18px;
    margin: 3px 0 0;
    padding: 0 6px 0 5px;
    background: #484848;
    border: 1px solid #363636;
    font-size: 12px;
    line-height: 16px;
}
.palette h3 button {
    width: 6px;
    height: 2px;
    background: #ddd;
}
.palette table {
    width: 193px;
    margin-left: 17px;
    border-spacing: 0;
    table-layout: fixed;
}
.palette th, .palette td {
    height: 18px;
    padding: 0 0 0 5px;
    border-bottom: 1px solid #505050;
    border-right: 1px solid #505050;
    line-height: 17px;
    text-align: left;
    white-space: nowrap;
}
.palette th {
    width: 85px;
    font-size: 12px;
    font-weight: normal;
}
.palette td {
    padding-left: 3px;
}
.palette .cn {
    font-size: 12px;
}
.palette .off {
    color: #a8a8a8;
}
.chip {
    display: inline-block;
    width: 8px;
    height: 8px;
    margin: 0 6px 0 2px;
    background: #fff;
}
.rule {
    display: inline-block;
    width: 46px;
    height: 1px;
    margin: 0 4px 4px 2px;
    background: #ddd;
}
.stage {
    display: flex;
    flex-direction: column;
    min-width: 0;
    min-height: 0;
}
.canvas {
    position: relative;
    flex: 1;
    min-height: 0;
    background: #1f2630;
    overflow: hidden;
}
.drawing {
    position: absolute;
    inset: 0;
}
.viewcube {
    position: absolute;
    top: 3px;
    right: 12px;
    color: #9aa0a8;
    font-size: 11px;
}
.viewcube span {
    position: absolute;
}
.viewcube .north {
    top: 1px;
    left: 35px;
}
.viewcube .west {
    top: 34px;
    left: 0;
}
.viewcube .top {
    top: 31px;
    left: 31px;
    color: #59616a;
    font-size: 18px;
    line-height: 18px;
}
.viewcube .east {
    top: 34px;
    left: 69px;
}
.viewcube .south {
    top: 69px;
    left: 35px;
}
.wcs {
    position: absolute;
    top: 98px;
    right: 30px;
    display: flex;
    align-items: center;
    gap: 6px;
    width: 44px;
    height: 15px;
    padding-left: 3px;
    border-radius: 4px;
    background: #8f949c;
    border: 1px solid #a2a6ad;
    color: #5a616b;
    font-size: 11px;
}
.navbar {
    position: absolute;
    top: 138px;
    right: 4px;
    border-radius: 4px;
    background: rgba(110, 118, 128, 0.75);
}

/* command line */
.command {
    flex: none;
    display: flex;
    height: 57px;
    border-top: 2px solid #777;
}
.command-grip {
    width: 21px;
    display: flex;
    flex-direction: column;
    align-items: center;
    justify-content: space-between;
    padding: 4px 0 6px;
    background: #6c6c6c;
}
.dots {
    width: 16px;
    height: 5px;
    background: radial-gradient(#aaa 40%, transparent 50%) 0 0 / 3px 3px;
}
.command-main {
    flex: 1;
    display: flex;
    flex-direction: column;
}
.history {
    flex: 1;
    padding: 3px 3px 0;
    background: #c6c6c6;
    color: #222;
    font-family: "Liberation Mono", "Noto Sans CJK SC", monospace;
    font-size: 12px;
    line-height: 15px;
}
.prompt {
    display: flex;
    align-items: center;
    gap: 3px;
    height: 22px;
    padding-left: 5px;
    background: #fdfdfd;
    border-top: 1px solid #888;
}
.cursor {
    width: 1px;
    height: 14px;
    background: #222;
}
.prompt input {
    flex: 1;
    color: #222;
    outline: none;
}

/* footer */
.footer {
    flex: none;
    display: flex;
    justify-content: space-between;
    height: 20px;
    background: #333;
    border-bottom: 2px solid #000;
}
.layout-tabs {
    display: flex;
    padding-left: 8px;
}
.layout-tabs a, .layout-tabs button {
    height: 16px;
    line-height: 16px;
    padding: 0 12px;
    margin-right: -4px;
    background: #4c4c4c;
    color: #aaa;
    clip-path: polygon(0 0, 100% 0, 90% 80%, 85% 100%, 15% 100%, 10% 80%);
}
.layout-tabs .active {
    padding: 0 14px;
    background: linear-gradient(#555, #7a7a7a);
    color: #fff;
    font-weight: bold;
}
.layout-tabs button {
    margin-left: 5px;
    padding: 0 8px;
    color: #ddd;
    font-size: 14px;
}
.status {
    display: flex;
    align-items: flex-start;
    overflow: hidden;
    background: #484848;
    border-top: 1px solid #6a6a6a;
}
.status button {
    display: flex;
    justify-content: center;
    width: 23px;
    height: 20px;
    padding-top: 4px;
}
.status .end {
    border-right: 1px solid #6a6a6a;
}
.status .scale ~ button {
    width: 25px;
}
.status .drop, .status .scale ~ .drop {
    width: 14px;
    padding-top: 9px;
}
.status .model {
    width: 28px;
    font-weight: bold;
}
.status .scale {
    width: 32px;
    gap: 3px;
}
.scale .caret {
    margin-top: 5px;
}
.status .blue {
    color: #2f86f0;
}
```
